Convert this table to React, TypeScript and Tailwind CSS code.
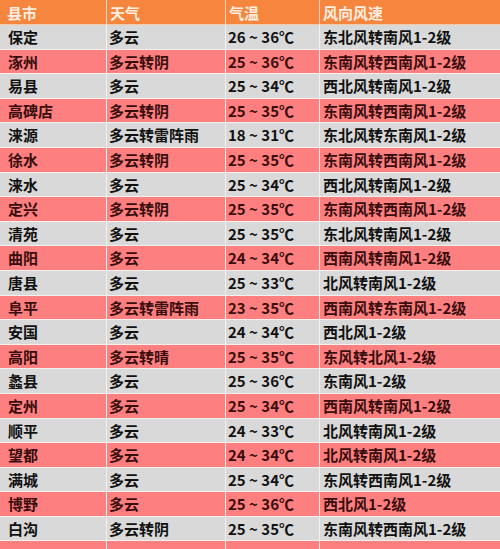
import React from "react";

const rows: [string, string, string, string][] = [
  ["保定", "多云", "26 ~ 36℃", "东北风转南风1-2级"],
  ["涿州", "多云转阴", "25 ~ 36℃", "东南风转西南风1-2级"],
  ["易县", "多云", "25 ~ 34℃", "西北风转南风1-2级"],
  ["高碑店", "多云转阴", "25 ~ 35℃", "东南风转西南风1-2级"],
  ["涞源", "多云转雷阵雨", "18 ~ 31℃", "东北风转东南风1-2级"],
  ["徐水", "多云转阴", "25 ~ 35℃", "东南风转西南风1-2级"],
  ["涞水", "多云", "25 ~ 34℃", "西北风转南风1-2级"],
  ["定兴", "多云转阴", "25 ~ 35℃", "东南风转西南风1-2级"],
  ["清苑", "多云", "25 ~ 35℃", "东北风转南风1-2级"],
  ["曲阳", "多云", "24 ~ 34℃", "西南风转南风1-2级"],
  ["唐县", "多云", "25 ~ 33℃", "北风转南风1-2级"],
  ["阜平", "多云转雷阵雨", "23 ~ 35℃", "西南风转东南风1-2级"],
  ["安国", "多云", "24 ~ 34℃", "西北风1-2级"],
  ["高阳", "多云转晴", "25 ~ 35℃", "东风转北风1-2级"],
  ["蠡县", "多云", "25 ~ 36℃", "东南风1-2级"],
  ["定州", "多云", "25 ~ 34℃", "西南风转南风1-2级"],
  ["顺平", "多云", "24 ~ 33℃", "北风转南风1-2级"],
  ["望都", "多云", "24 ~ 34℃", "北风转南风1-2级"],
  ["满城", "多云", "25 ~ 34℃", "东风转西南风1-2级"],
  ["博野", "多云", "25 ~ 36℃", "西北风1-2级"],
  ["白沟", "多云转阴", "25 ~ 35℃", "东南风转西南风1-2级"],
  ["", "", "", ""],
];

const cols = "grid grid-cols-[107px_119px_94px_180px]";

export default function App() {
  return (
    <div
      className="w-[500px] h-[549px] overflow-hidden bg-white"
      style={{ fontFamily: '"Noto Sans CJK SC", "Noto Sans", sans-serif' }}
    >
      {/* header */}
      <div className={`${cols} h-[25px] bg-[#f6853d] text-[#fdeee2] text-[15px] font-bold leading-[25px] border-b border-[#f3c9a8]`}>
        <div className="pl-[7px] border-r border-[#fbd9c0]">县市</div>
        <div className="pl-[3px] border-r border-[#fbd9c0]">天气</div>
        <div className="pl-[3px] border-r border-[#fbd9c0]">气温</div>
        <div className="pl-[3px]">风向风速</div>
      </div>

      {rows.map((r, i) => (
        <div
          key={i}
          className={`${cols} h-[24.6px] border-b border-[#f4f0ee] text-[15px] font-bold leading-[23px] ${
            i % 2 === 0 ? "bg-[#d9d9d9] text-[#111111]" : "bg-[#fd7f80] text-[#3a0d0d]"
          }`}
        >
          <div className="pl-[8px] border-r border-[#f4f0ee] whitespace-nowrap">{r[0]}</div>
          <div className="pl-[2px] border-r border-[#f4f0ee] whitespace-nowrap">{r[1]}</div>
          <div className="pl-[2px] border-r border-[#f4f0ee] whitespace-nowrap">{r[2]}</div>
          <div className="pl-[3px] whitespace-nowrap">{r[3]}</div>
        </div>
      ))}
    </div>
  );
}
